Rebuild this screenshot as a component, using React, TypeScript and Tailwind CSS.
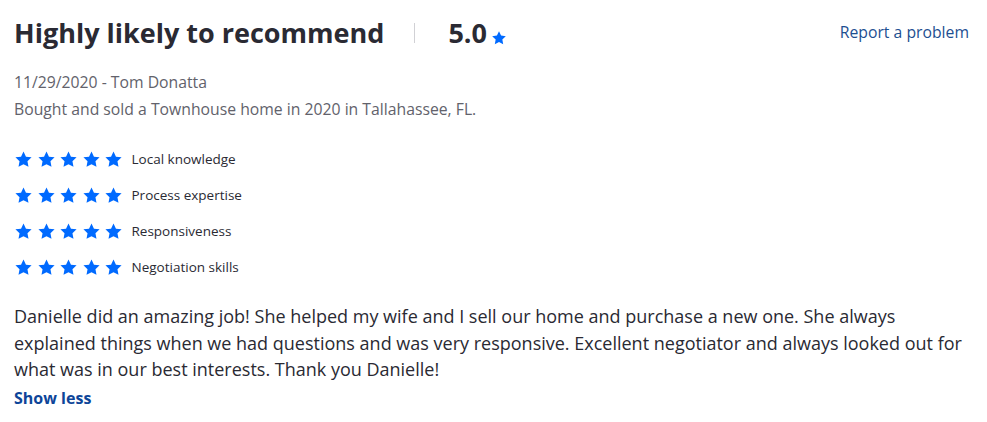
import React from 'react';

const Star: React.FC<{ size?: number; className?: string }> = ({ size = 18, className = '' }) => (
  <svg width={size} height={size} viewBox="0 0 24 24" className={className}>
    <path
      fill="#006aff"
      d="M12 1.8l3.1 6.6 7.1.9-5.2 4.9 1.3 7.1L12 17.9l-6.3 3.4 1.3-7.1-5.2-4.9 7.1-.9z"
    />
  </svg>
);

const categories = ['Local knowledge', 'Process expertise', 'Responsiveness', 'Negotiation skills'];

export default function App() {
  return (
    <div className="w-[987px] h-[422px] bg-white px-[14px] pt-[14px] font-['Open_Sans',sans-serif] text-[#2a2a33]">
      <div className="flex items-start justify-between">
        <div className="flex items-center">
          <h2 className="text-[27px] leading-[38px] font-bold">Highly likely to recommend</h2>
          <div className="w-px h-[20px] bg-[#d1d1d5] ml-[30px] mr-[33px]" />
          <span className="text-[27px] leading-[38px] font-bold">5.0</span>
          <Star size={16} className="ml-[4px] mt-[10px]" />
        </div>
        <a className="text-[15.75px] leading-[24px] text-[#1d4f91] mt-[6px] mr-[4px]">Report a problem</a>
      </div>

      <div className="mt-[17px] text-[15.75px] leading-[27px] text-[#62626b]">
        <p>11/29/2020 - Tom Donatta</p>
        <p>Bought and sold a Townhouse home in 2020 in Tallahassee, FL.</p>
      </div>

      <div className="mt-[24px] flex flex-col gap-[12px]">
        {categories.map((c) => (
          <div key={c} className="flex items-center h-[24px]">
            <div className="flex gap-[3.5px]">
              {[0, 1, 2, 3, 4].map((i) => (
                <Star key={i} size={19} />
              ))}
            </div>
            <span className="ml-[8.5px] text-[13.5px] text-[#2a2a33]">{c}</span>
          </div>
        ))}
      </div>

      <p className="mt-[24px] text-[18px] leading-[26.5px] text-[#2a2a33] pr-[4px]">
        Danielle did an amazing job! She helped my wife and I sell our home and purchase a new one. She always
        explained things when we had questions and was very responsive. Excellent negotiator and always looked out for
        what was in our best interests. Thank you Danielle!
      </p>
      <button className="text-[16px] leading-[24px] font-bold text-[#0d4599] mt-[3px]">Show less</button>
    </div>
  );
}
